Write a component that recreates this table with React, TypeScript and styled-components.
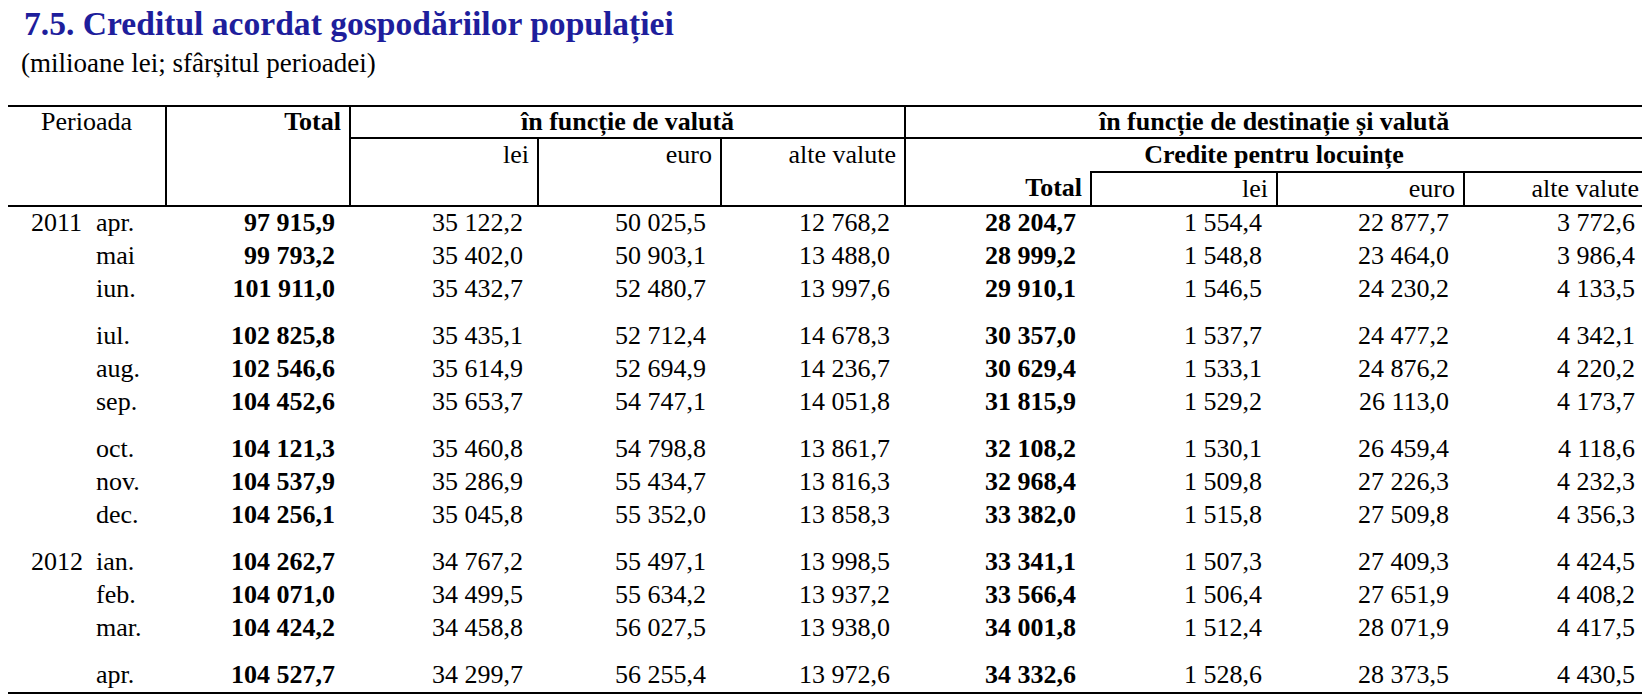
import React from 'react';
import styled, { createGlobalStyle, css } from 'styled-components';

const GlobalStyle = createGlobalStyle`
  html, body {
    margin: 0;
    padding: 0;
    background: #ffffff;
    color: #000000;
  }
`;

const Page = styled.div`
  padding: 0 8px;
  font-family: "Liberation Serif", serif;
`;

const Title = styled.h1`
  margin: 5px 0 0 16px;
  font-family: "Liberation Serif", serif;
  font-size: 33.6px;
  line-height: 38px;
  font-weight: bold;
  color: #1e1e9c;
`;

const Subtitle = styled.p`
  margin: 4px 0 0 13px;
  font-family: "Liberation Serif", serif;
  font-size: 27px;
  line-height: 32px;
`;

const Table = styled.table`
  margin-top: 26px;
  width: 100%;
  table-layout: fixed;
  border-collapse: collapse;
  border-top: 2px solid #000;
  border-bottom: 2px solid #000;
  font-family: "Liberation Serif", serif;
  font-size: 26px;

  thead {
    border-bottom: 2px solid #000;
  }
`;

type HeadProps = {
  $align?: 'left' | 'center' | 'right';
  $bold?: boolean;
  $leftRule?: boolean;
  $topRule?: boolean;
  $bottomRule?: boolean;
  $tall?: boolean;
  $last?: boolean;
};

const HeadCell = styled.th<HeadProps>`
  padding: 0 ${(p) => (p.$last ? '3px' : '8px')} 0 8px;
  font-family: "Liberation Serif", serif;
  font-size: 26px;
  text-align: ${(p) => p.$align || 'right'};
  font-weight: ${(p) => (p.$bold ? 'bold' : 'normal')};
  line-height: ${(p) => (p.$tall ? '30px' : '32px')};
  vertical-align: top;
  white-space: nowrap;
  ${(p) =>
    p.$leftRule &&
    css`
      border-left: 2px solid #000;
    `}
  ${(p) =>
    p.$topRule &&
    css`
      border-top: 2px solid #000;
    `}
  ${(p) =>
    p.$bottomRule &&
    css`
      border-bottom: 2px solid #000;
    `}
`;

const DataRow = styled.tr<{ $groupStart?: boolean }>`
  td {
    padding-top: ${(p) => (p.$groupStart ? '14px' : '0')};
  }
`;

const Cell = styled.td<{ $bold?: boolean; $last?: boolean }>`
  padding-right: ${(p) => (p.$last ? '7px' : '15px')};
  font-family: "Liberation Serif", serif;
  font-size: 26px;
  text-align: right;
  line-height: 32px;
  font-weight: ${(p) => (p.$bold ? 'bold' : 'normal')};
  white-space: nowrap;
`;

const PeriodCell = styled.td`
  padding-left: 23px;
  font-family: "Liberation Serif", serif;
  font-size: 26px;
  line-height: 32px;
  white-space: nowrap;
`;

const Year = styled.span`
  display: inline-block;
  width: 65px;
`;

type Row = {
  year?: string;
  month: string;
  values: string[];
  groupStart?: boolean;
};

const rows: Row[] = [
  { year: '2011', month: 'apr.', values: ['97 915,9', '35 122,2', '50 025,5', '12 768,2', '28 204,7', '1 554,4', '22 877,7', '3 772,6'] },
  { month: 'mai', values: ['99 793,2', '35 402,0', '50 903,1', '13 488,0', '28 999,2', '1 548,8', '23 464,0', '3 986,4'] },
  { month: 'iun.', values: ['101 911,0', '35 432,7', '52 480,7', '13 997,6', '29 910,1', '1 546,5', '24 230,2', '4 133,5'] },
  { month: 'iul.', groupStart: true, values: ['102 825,8', '35 435,1', '52 712,4', '14 678,3', '30 357,0', '1 537,7', '24 477,2', '4 342,1'] },
  { month: 'aug.', values: ['102 546,6', '35 614,9', '52 694,9', '14 236,7', '30 629,4', '1 533,1', '24 876,2', '4 220,2'] },
  { month: 'sep.', values: ['104 452,6', '35 653,7', '54 747,1', '14 051,8', '31 815,9', '1 529,2', '26 113,0', '4 173,7'] },
  { month: 'oct.', groupStart: true, values: ['104 121,3', '35 460,8', '54 798,8', '13 861,7', '32 108,2', '1 530,1', '26 459,4', '4 118,6'] },
  { month: 'nov.', values: ['104 537,9', '35 286,9', '55 434,7', '13 816,3', '32 968,4', '1 509,8', '27 226,3', '4 232,3'] },
  { month: 'dec.', values: ['104 256,1', '35 045,8', '55 352,0', '13 858,3', '33 382,0', '1 515,8', '27 509,8', '4 356,3'] },
  { year: '2012', month: 'ian.', groupStart: true, values: ['104 262,7', '34 767,2', '55 497,1', '13 998,5', '33 341,1', '1 507,3', '27 409,3', '4 424,5'] },
  { month: 'feb.', values: ['104 071,0', '34 499,5', '55 634,2', '13 937,2', '33 566,4', '1 506,4', '27 651,9', '4 408,2'] },
  { month: 'mar.', values: ['104 424,2', '34 458,8', '56 027,5', '13 938,0', '34 001,8', '1 512,4', '28 071,9', '4 417,5'] },
  { month: 'apr.', groupStart: true, values: ['104 527,7', '34 299,7', '56 255,4', '13 972,6', '34 332,6', '1 528,6', '28 373,5', '4 430,5'] },
];

const widths = [158, 184, 188, 183, 184, 186, 186, 187, 178];
const boldColumns = [0, 4];

const App: React.FC = () => {
  return (
    <>
      <GlobalStyle />
      <Page>
        <Title>7.5. Creditul acordat gospodăriilor populației</Title>
        <Subtitle>(milioane lei; sfârșitul perioadei)</Subtitle>
        <Table>
          <colgroup>
            {widths.map((w, i) => (
              <col key={i} style={{ width: w }} />
            ))}
          </colgroup>
          <thead>
            <tr>
              <HeadCell rowSpan={3} $align="center" $tall>
                Perioada
              </HeadCell>
              <HeadCell rowSpan={3} $bold $leftRule $tall>
                Total
              </HeadCell>
              <HeadCell colSpan={3} $align="center" $bold $leftRule $bottomRule $tall>
                în funcție de valută
              </HeadCell>
              <HeadCell colSpan={4} $align="center" $bold $leftRule $bottomRule $tall>
                în funcție de destinație și valută
              </HeadCell>
            </tr>
            <tr>
              <HeadCell rowSpan={2} $leftRule>
                lei
              </HeadCell>
              <HeadCell rowSpan={2} $leftRule>
                euro
              </HeadCell>
              <HeadCell rowSpan={2} $leftRule>
                alte valute
              </HeadCell>
              <HeadCell colSpan={4} $align="center" $bold $leftRule>
                Credite pentru locuințe
              </HeadCell>
            </tr>
            <tr>
              <HeadCell $bold $leftRule>
                Total
              </HeadCell>
              <HeadCell $leftRule $topRule>
                lei
              </HeadCell>
              <HeadCell $leftRule $topRule>
                euro
              </HeadCell>
              <HeadCell $leftRule $topRule $last>
                alte valute
              </HeadCell>
            </tr>
          </thead>
          <tbody>
            {rows.map((row, r) => (
              <DataRow key={r} $groupStart={row.groupStart}>
                <PeriodCell>
                  <Year>{row.year}</Year>
                  {row.month}
                </PeriodCell>
                {row.values.map((v, i) => (
                  <Cell key={i} $bold={boldColumns.includes(i)} $last={i === row.values.length - 1}>
                    {v}
                  </Cell>
                ))}
              </DataRow>
            ))}
          </tbody>
        </Table>
      </Page>
    </>
  );
};

export default App;
